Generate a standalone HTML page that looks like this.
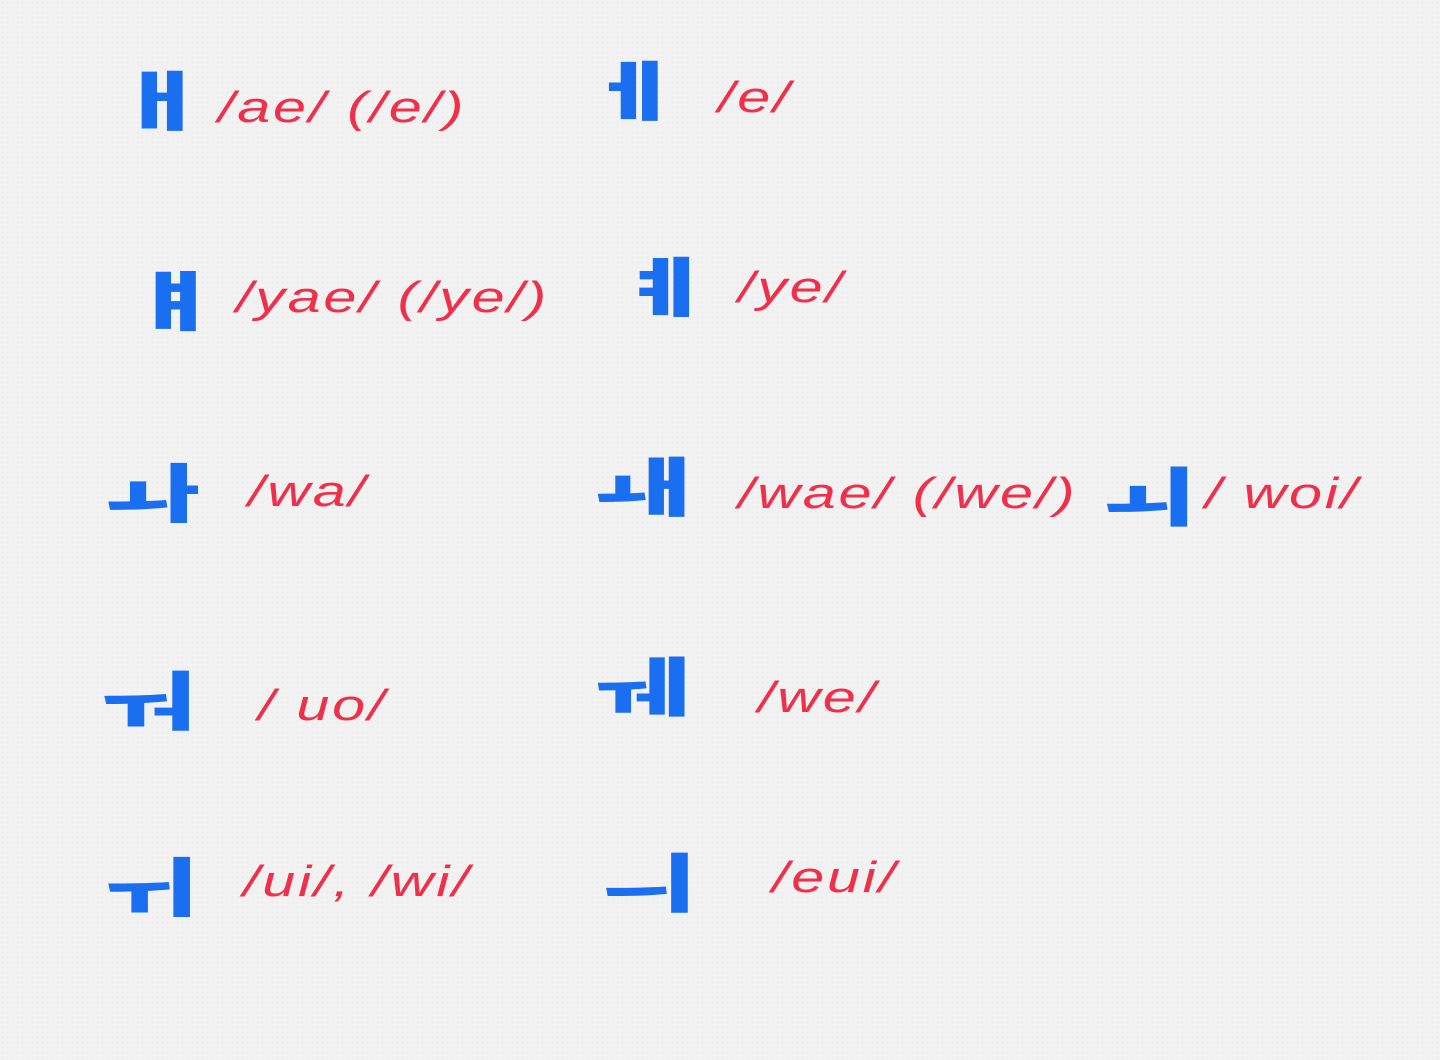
<!DOCTYPE html>
<html><head><meta charset="utf-8"><style>
html,body{margin:0;padding:0}
body{width:1440px;height:1060px;background:#f2f2f2;position:relative;overflow:hidden;
background-image:radial-gradient(#ececec 1px,transparent 1px);background-size:5px 5px}
.k{position:absolute;color:#1a6ff0;font-family:"Noto Sans CJK KR","NanumGothic",sans-serif;font-weight:900;font-size:64px;line-height:64px;transform:scaleX(1.6);transform-origin:left}
.r{position:absolute;color:#f0304a;font-family:"Liberation Sans",sans-serif;font-style:italic;font-size:44px;line-height:44px;letter-spacing:2px;transform:scaleX(1.35);transform-origin:left}
</style></head><body>
<div class="k" style="left:114px;top:66px">ㅐ</div>
<div class="r" style="left:218px;top:86px">/ae/ (/e/)</div>
<div class="k" style="left:586px;top:56px">ㅔ</div>
<div class="r" style="left:718px;top:76px">/e/</div>

<div class="k" style="left:128px;top:266px">ㅒ</div>
<div class="r" style="left:236px;top:276px">/yae/ (/ye/)</div>
<div class="k" style="left:618px;top:252px">ㅖ</div>
<div class="r" style="left:738px;top:266px">/ye/</div>

<div class="k" style="left:106px;top:458px">ㅘ</div>
<div class="r" style="left:248px;top:470px">/wa/</div>
<div class="k" style="left:594px;top:452px">ㅙ</div>
<div class="r" style="left:738px;top:472px">/wae/ (/we/)</div>
<div class="k" style="left:1100px;top:462px">ㅚ</div>
<div class="r" style="left:1205px;top:472px">/ woi/</div>

<div class="k" style="left:100px;top:666px">ㅝ</div>
<div class="r" style="left:258px;top:684px">/ uo/</div>
<div class="k" style="left:594px;top:652px">ㅞ</div>
<div class="r" style="left:758px;top:676px">/we/</div>

<div class="k" style="left:102px;top:852px">ㅟ</div>
<div class="r" style="left:243px;top:860px">/ui/, /wi/</div>
<div class="k" style="left:600px;top:848px">ㅢ</div>
<div class="r" style="left:772px;top:856px">/eui/</div>
</body></html>
